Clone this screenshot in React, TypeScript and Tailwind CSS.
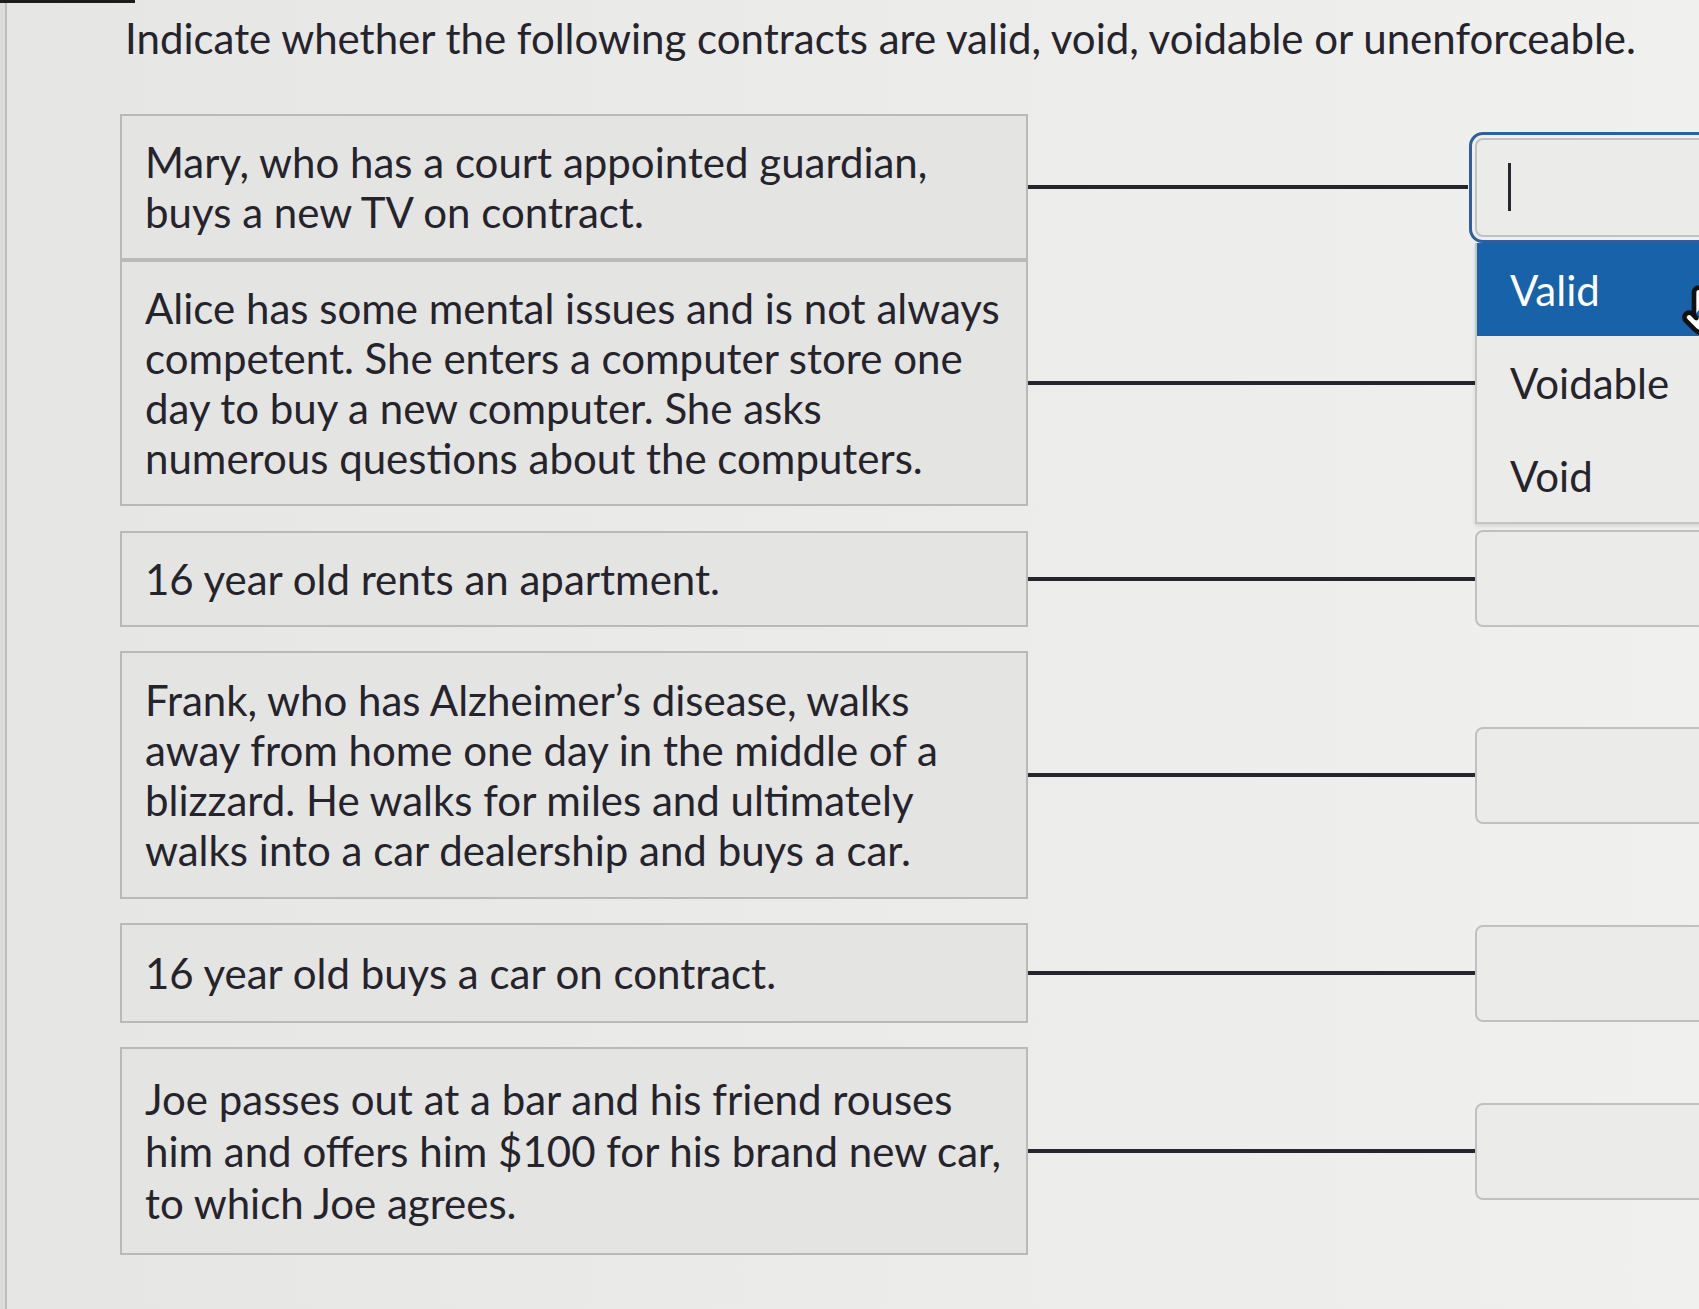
import { Pointer } from 'lucide-react';

type Row = {
  lines: string[];
  focused?: boolean;
  gapBefore?: boolean;
  pad?: string;
};

const rows: Row[] = [
  {
    lines: ['Mary, who has a court appointed guardian,', 'buys a new TV on contract.'],
    focused: true,
  },
  {
    lines: [
      'Alice has some mental issues and is not always',
      'competent. She enters a computer store one',
      'day to buy a new computer. She asks',
      'numerous questions about the computers.',
    ],
  },
  { lines: ['16 year old rents an apartment.'], gapBefore: true },
  {
    lines: [
      'Frank, who has Alzheimer’s disease, walks',
      'away from home one day in the middle of a',
      'blizzard. He walks for miles and ultimately',
      'walks into a car dealership and buys a car.',
    ],
    gapBefore: true,
    pad: 'py-[22px]',
  },
  { lines: ['16 year old buys a car on contract.'], gapBefore: true, pad: 'py-[23px]' },
  {
    lines: [
      'Joe passes out at a bar and his friend rouses',
      'him and offers him $100 for his brand new car,',
      'to which Joe agrees.',
    ],
    gapBefore: true,
    pad: 'py-[24px] leading-[52px]',
  },
];

const options = ['Valid', 'Voidable', 'Void'];

function MatchRow({ row }: { row: Row }) {
  return (
    <div className={`flex items-center ${row.gapBefore ? 'mt-[24px]' : ''}`}>
      <div
        className={`w-[908px] shrink-0 border-2 border-[#b9b9b8] bg-[#e4e4e3] px-[23px] whitespace-nowrap ${
          row.pad ?? 'py-[21px]'
        }`}
      >
        {row.lines.map((l) => (
          <div key={l}>{l}</div>
        ))}
      </div>
      <div className={`h-[4px] shrink-0 bg-[#26252d] ${row.focused ? 'w-[440px]' : 'w-[447px]'}`} />
      {row.focused ? (
        <div className="ml-[7px] flex h-[99px] w-[280px] shrink-0 items-center rounded-[8px] border-2 border-[#c2c2c2] bg-[#ebebea] pl-[31px] outline-[3px] outline-offset-[3px] outline-[#2e5f9f]">
          <span className="block h-[48px] w-[3px] bg-[#2a2630]" />
        </div>
      ) : (
        <div className="h-[97px] w-[280px] shrink-0 rounded-[8px] border-2 border-[#c0c0bf] bg-[#ebebea]" />
      )}
    </div>
  );
}

export default function App() {
  return (
    <div
      className="relative flex h-[1309px] w-[1699px] overflow-hidden bg-gradient-to-r from-[#e6e6e4] via-[#ebebea] to-[#f0f0ef] text-[42px] leading-[50px] text-[#25232b]"
      style={{ fontFamily: 'Lato, "Noto Sans", sans-serif' }}
    >
      <div className="absolute left-0 top-0 h-[3px] w-[135px] bg-[#1c1c1c]" />
      <div className="w-[7px] shrink-0 border-r-2 border-[#bdbdbc] bg-[#dcdcda]" />

      <div className="flex-1">
        <h1 className="pl-[118px] pt-[13px] font-normal whitespace-nowrap">
          Indicate whether the following contracts are valid, void, voidable or unenforceable.
        </h1>

        <div className="mt-[51px] pl-[113px]">
          {rows.map((r, i) => (
            <MatchRow key={i} row={r} />
          ))}
        </div>
      </div>

      {/* open dropdown menu for the first row */}
      <div className="absolute left-[1475px] top-[243px] w-[240px] border-b-2 border-l-2 border-[#c4c4c3] bg-[#ebebea] shadow-[0_2px_4px_rgba(0,0,0,0.12)]">
        {options.map((o, i) => (
          <div
            key={o}
            className={`flex h-[93px] items-center pl-[33px] ${
              i === 0 ? 'bg-[#1762a8] text-white' : ''
            }`}
          >
            {o}
          </div>
        ))}
      </div>

      <Pointer
        className="absolute left-[1680px] top-[283px]"
        size={56}
        strokeWidth={2}
        fill="#ffffff"
        color="#111111"
      />
    </div>
  );
}
